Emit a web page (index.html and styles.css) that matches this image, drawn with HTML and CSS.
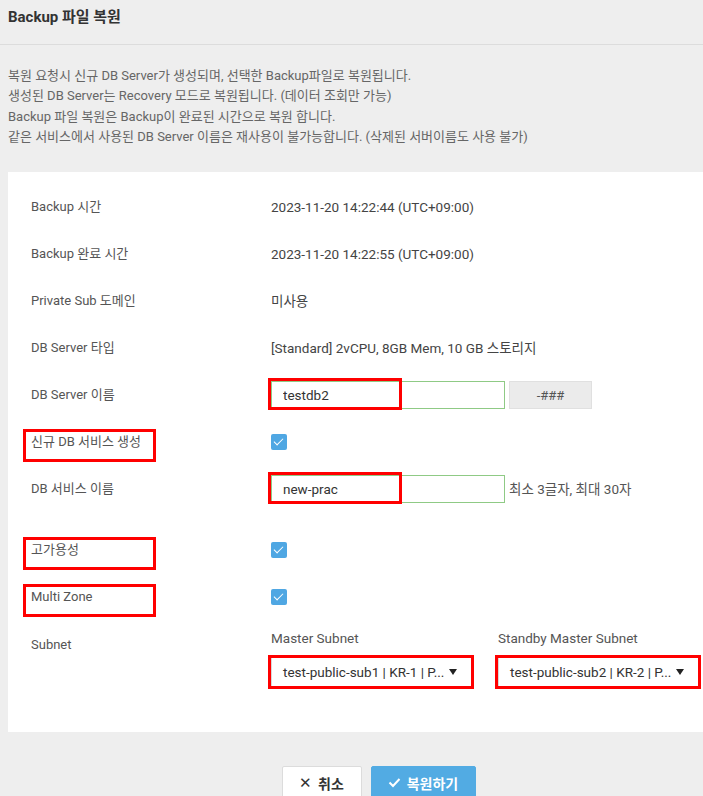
FILE: index.html
```html
<!DOCTYPE html>
<html lang="ko">

<head>
    <meta charset="UTF-8">
    <title>Backup 파일 복원</title>
    <link rel="stylesheet" href="styles.css">
</head>

<body>
    <div class="header">
        <h1 class="title">Backup 파일 복원</h1>
    </div>

    <div class="desc">
        <p>복원 요청시 신규 DB Server가 생성되며, 선택한 Backup파일로 복원됩니다.</p>
        <p>생성된 DB Server는 Recovery 모드로 복원됩니다. (데이터 조회만 가능)</p>
        <p>Backup 파일 복원은 Backup이 완료된 시간으로 복원 합니다.</p>
        <p>같은 서비스에서 사용된 DB Server 이름은 재사용이 불가능합니다. (삭제된 서버이름도 사용 불가)</p>
    </div>

    <div class="card">
        <div class="row">
            <div class="label">Backup 시간</div>
            <div class="value">2023-11-20 14:22:44 (UTC+09:00)</div>
        </div>
        <div class="row">
            <div class="label">Backup 완료 시간</div>
            <div class="value">2023-11-20 14:22:55 (UTC+09:00)</div>
        </div>
        <div class="row">
            <div class="label">Private Sub 도메인</div>
            <div class="value">미사용</div>
        </div>
        <div class="row">
            <div class="label">DB Server 타입</div>
            <div class="value">[Standard] 2vCPU, 8GB Mem, 10 GB 스토리지</div>
        </div>
        <div class="row">
            <div class="label">DB Server 이름</div>
            <div class="value inline">
                <div class="field">
                    <input class="input-field" id="server-name" value="testdb2">
                    <span class="mark mark-input"></span>
                </div>
                <button class="suffix">-###</button>
            </div>
        </div>
        <div class="row">
            <div class="label"><span class="marked">신규 DB 서비스 생성</span></div>
            <div class="value"><span class="check"></span></div>
        </div>
        <div class="row">
            <div class="label">DB 서비스 이름</div>
            <div class="value inline">
                <div class="field">
                    <input class="input-field" id="service-name" value="new-prac">
                    <span class="mark mark-input"></span>
                </div>
                <span class="hint">최소 3글자, 최대 30자</span>
            </div>
        </div>
        <div class="row row-gap">
            <div class="label"><span class="marked">고가용성</span></div>
            <div class="value"><span class="check"></span></div>
        </div>
        <div class="row">
            <div class="label"><span class="marked">Multi Zone</span></div>
            <div class="value"><span class="check"></span></div>
        </div>
        <div class="row row-subnet">
            <div class="label subnet-label">Subnet</div>
            <div class="value subnets">
                <div class="subnet">
                    <div class="subnet-title">Master Subnet</div>
                    <div class="field">
                        <div class="select">test-public-sub1 | KR-1 | P...<span class="caret"></span></div>
                        <span class="mark mark-select"></span>
                    </div>
                </div>
                <div class="subnet">
                    <div class="subnet-title">Standby Master Subnet</div>
                    <div class="field">
                        <div class="select">test-public-sub2 | KR-2 | P...<span class="caret"></span></div>
                        <span class="mark mark-select"></span>
                    </div>
                </div>
            </div>
        </div>
    </div>

    <div class="actions">
        <button class="btn btn-cancel"><span class="x">✕</span> 취소</button>
        <button class="btn btn-ok">
            <svg width="13" height="11" viewBox="0 0 13 11"><path d="M1.5 5.5 L5 9 L11.5 2" fill="none" stroke="#fff" stroke-width="2"/></svg>
            복원하기
        </button>
    </div>
</body>

</html>
```

FILE: styles.css
```css
html, body {
    margin: 0;
    padding: 0;
    overflow: hidden;
}

body {
    background-color: #eeeeee;
    font-family: Roboto, "Noto Sans CJK KR", sans-serif;
    font-size: 13px;
    color: #444;
    width: 703px;
}

.header {
    height: 45px;
    border-bottom: 1px solid #dcdcdc;
    padding: 7px 8px 0;
    box-sizing: border-box;
}

.title {
    margin: 0;
    font-size: 15px;
    line-height: 20px;
    font-weight: bold;
    color: #333;
}

.desc {
    padding: 21px 8px 0;
    color: #666;
}

.desc p {
    margin: 0;
    line-height: 20.4px;
}

.card {
    margin: 24px 0 0 8px;
    background-color: #fff;
    padding: 12px 0 43px 23px;
    height: 560px;
    box-sizing: border-box;
}

.row {
    display: grid;
    grid-template-columns: 240px 1fr;
    height: 47px;
    align-items: center;
    line-height: 20px;
}

.row-gap {
    margin-top: 14px;
}

.label {
    color: #555;
}

.value {
    color: #444;
    font-size: 13.5px;
}

.inline {
    display: flex;
    align-items: center;
    gap: 4px;
}

.field {
    position: relative;
}

.input-field {
    display: block;
    width: 234px;
    height: 28px;
    box-sizing: border-box;
    border: 1px solid #8fca85;
    padding: 0 11px;
    font-family: inherit;
    font-size: 13.5px;
    color: #333;
    outline: none;
}

.suffix {
    width: 83px;
    height: 28px;
    background-color: #ebebeb;
    border: 1px solid #e0e0e0;
    font-family: inherit;
    font-size: 13px;
    color: #555;
}

.hint {
    color: #555;
}

.mark {
    position: absolute;
    border: 3px solid #f00;
    box-sizing: border-box;
}

.mark-input {
    left: -3px;
    top: -3px;
    width: 134px;
    height: 32px;
}

.mark-select {
    left: -3px;
    top: -2px;
    width: 206px;
    height: 34px;
}

.marked {
    position: relative;
}

.marked::after {
    content: "";
    position: absolute;
    left: -8px;
    top: -5px;
    width: 133px;
    height: 33px;
    border: 3px solid #f00;
    box-sizing: border-box;
}

.check {
    display: block;
    width: 16px;
    height: 16px;
    border-radius: 2px;
    background-color: #4fa7e3;
    position: relative;
}

.check::after {
    content: "";
    position: absolute;
    left: 5px;
    top: 2px;
    width: 4px;
    height: 8px;
    border: solid #fff;
    border-width: 0 1.5px 1.5px 0;
    transform: rotate(45deg);
}

.row-subnet {
    height: auto;
    align-items: start;
    padding-top: 7px;
}

.subnet-label {
    padding-top: 7px;
}

.subnets {
    display: flex;
    gap: 25px;
}

.subnet-title {
    color: #555;
    font-size: 13.5px;
    margin-bottom: 9px;
}

.select {
    width: 202px;
    height: 31px;
    box-sizing: border-box;
    border: 1px solid #d8d8d8;
    padding: 0 17px 0 11px;
    line-height: 29px;
    color: #333;
    white-space: nowrap;
    display: flex;
    align-items: center;
    gap: 5px;
}

.caret {
    width: 0;
    height: 0;
    border-left: 4px solid transparent;
    border-right: 4px solid transparent;
    border-top: 6px solid #222;
}

.actions {
    display: flex;
    justify-content: center;
    gap: 9px;
    padding: 34px 0 0 54px;
}

.btn {
    height: 34px;
    font-family: inherit;
    font-size: 14px;
    font-weight: bold;
    border-radius: 2px;
    display: flex;
    align-items: center;
    justify-content: center;
    gap: 6px;
}

.btn-cancel {
    width: 80px;
    background-color: #fff;
    border: 1px solid #dcdcdc;
    color: #333;
}

.x {
    font-weight: normal;
    font-size: 15px;
}

.btn-ok {
    width: 105px;
    background-color: #52abe3;
    border: 1px solid #52abe3;
    color: #fff;
}
```
